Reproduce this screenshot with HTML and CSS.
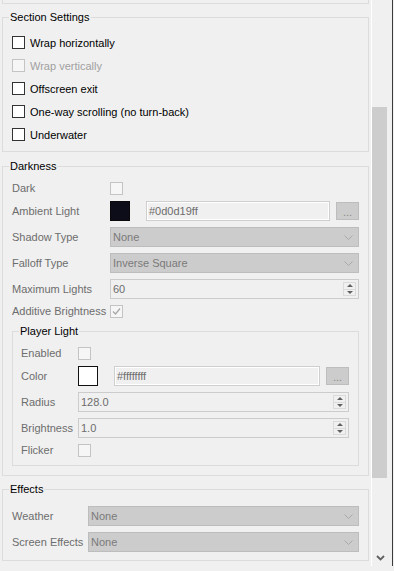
FILE: index.html
```html
<!DOCTYPE html>
<html lang="en">
<head>
    <meta charset="UTF-8">
    <title>Section Properties</title>
    <link rel="stylesheet" href="styles.css">
</head>
<body>
    <div class="window">
        <div class="pane">
            <div class="group-tail"></div>

            <fieldset class="group group-section">
                <legend>Section Settings</legend>
                <div class="check-row"><span class="box"></span>Wrap horizontally</div>
                <div class="check-row disabled"><span class="box"></span>Wrap vertically</div>
                <div class="check-row"><span class="box"></span>Offscreen exit</div>
                <div class="check-row"><span class="box"></span>One-way scrolling (no turn-back)</div>
                <div class="check-row"><span class="box"></span>Underwater</div>
            </fieldset>

            <fieldset class="group group-darkness">
                <legend>Darkness</legend>
                <div class="form">
                    <div class="field">
                        <span class="label">Dark</span>
                        <span class="box box-off"></span>
                    </div>
                    <div class="field">
                        <span class="label">Ambient Light</span>
                        <div class="color-pick">
                            <span class="swatch swatch-dark"></span>
                            <span class="text-input">#0d0d19ff</span>
                            <span class="dots">...</span>
                        </div>
                    </div>
                    <div class="field">
                        <span class="label">Shadow Type</span>
                        <div class="combo"><span>None</span><svg width="9" height="5" viewBox="0 0 9 5"><polyline points="0.5,0.5 4.5,4.5 8.5,0.5" fill="none" stroke="#a9a9a9" stroke-width="1"/></svg></div>
                    </div>
                    <div class="field">
                        <span class="label">Falloff Type</span>
                        <div class="combo"><span>Inverse Square</span><svg width="9" height="5" viewBox="0 0 9 5"><polyline points="0.5,0.5 4.5,4.5 8.5,0.5" fill="none" stroke="#a9a9a9" stroke-width="1"/></svg></div>
                    </div>
                    <div class="field">
                        <span class="label">Maximum Lights</span>
                        <div class="spin"><span>60</span><span class="spin-buttons"><span class="spin-up"></span><span class="spin-down"></span></span></div>
                    </div>
                    <div class="field">
                        <span class="label">Additive Brightness</span>
                        <span class="box box-off"><svg width="11" height="11" viewBox="0 0 11 11"><polyline points="2,5.5 4.5,8 9,2.5" fill="none" stroke="#a6a6a6" stroke-width="1.2"/></svg></span>
                    </div>

                    <fieldset class="group group-player">
                        <legend>Player Light</legend>
                        <div class="form">
                            <div class="field">
                                <span class="label">Enabled</span>
                                <span class="box box-off"></span>
                            </div>
                            <div class="field">
                                <span class="label">Color</span>
                                <div class="color-pick">
                                    <span class="swatch swatch-white"></span>
                                    <span class="text-input">#ffffffff</span>
                                    <span class="dots">...</span>
                                </div>
                            </div>
                            <div class="field">
                                <span class="label">Radius</span>
                                <div class="spin"><span>128.0</span><span class="spin-buttons"><span class="spin-up"></span><span class="spin-down"></span></span></div>
                            </div>
                            <div class="field">
                                <span class="label">Brightness</span>
                                <div class="spin"><span>1.0</span><span class="spin-buttons"><span class="spin-up"></span><span class="spin-down"></span></span></div>
                            </div>
                            <div class="field">
                                <span class="label">Flicker</span>
                                <span class="box box-off"></span>
                            </div>
                        </div>
                    </fieldset>
                </div>
            </fieldset>

            <fieldset class="group group-effects">
                <legend>Effects</legend>
                <div class="form">
                    <div class="field">
                        <span class="label">Weather</span>
                        <div class="combo"><span>None</span><svg width="9" height="5" viewBox="0 0 9 5"><polyline points="0.5,0.5 4.5,4.5 8.5,0.5" fill="none" stroke="#a9a9a9" stroke-width="1"/></svg></div>
                    </div>
                    <div class="field">
                        <span class="label">Screen Effects</span>
                        <div class="combo"><span>None</span><svg width="9" height="5" viewBox="0 0 9 5"><polyline points="0.5,0.5 4.5,4.5 8.5,0.5" fill="none" stroke="#a9a9a9" stroke-width="1"/></svg></div>
                    </div>
                </div>
            </fieldset>
        </div>

        <div class="scrollbar">
            <div class="thumb"></div>
            <svg class="arrow-down" width="9" height="6" viewBox="0 0 9 6"><polyline points="1,1 4.5,4.5 8,1" fill="none" stroke="#606060" stroke-width="1.8"/></svg>
        </div>
    </div>
</body>
</html>
```

FILE: styles.css
```css
body {
    margin: 0;
    background-color: #f0f0f0;
    font-family: "Liberation Sans", Arial, sans-serif;
    font-size: 11px;
    color: #000;
    overflow: hidden;
}

.window {
    display: flex;
    height: 571px;
}

.pane {
    width: 367px;
    padding-left: 2px;
}

.group-tail {
    height: 4px;
    box-sizing: border-box;
    border: 1px solid #dcdcdc;
    border-top: none;
}

.group {
    margin: 0;
    min-width: 0;
    border: 1px solid #dcdcdc;
    padding: 0 9px;
}

.group legend {
    padding: 0 1px;
    margin-left: -3px;
    line-height: 14px;
}

.group-section {
    margin-top: 6px;
    padding-top: 7px;
    padding-bottom: 5px;
}

.group-darkness {
    margin-top: 7px;
    padding-top: 9px;
    padding-bottom: 9px;
}

.group-player {
    padding: 9px 9px 8px 8px;
}

.group-player legend {
    margin-left: -2px;
}

.group-effects {
    margin-top: 6px;
    padding-top: 10px;
    padding-bottom: 8px;
}

.check-row {
    display: flex;
    align-items: center;
    gap: 5px;
    height: 23px;
}

.check-row.disabled {
    color: #a0a0a0;
}

.box {
    width: 13px;
    height: 13px;
    box-sizing: border-box;
    border: 1px solid #333;
    background-color: #fff;
    display: flex;
    align-items: center;
    justify-content: center;
}

.check-row.disabled .box,
.box-off {
    border-color: #c4c4c4;
    background-color: #f6f6f6;
}

.form {
    display: flex;
    flex-direction: column;
    gap: 6px;
}

.field {
    display: grid;
    grid-template-columns: 98px 1fr;
    align-items: center;
}

.group-player .field {
    grid-template-columns: 57px 1fr;
}

.group-effects .field {
    grid-template-columns: 76px 1fr;
}

.label {
    color: #6d6d6d;
    line-height: 13px;
}

.color-pick {
    display: flex;
    align-items: center;
    height: 20px;
}

.swatch {
    width: 20px;
    height: 20px;
    box-sizing: border-box;
    margin-right: 16px;
}

.swatch-dark {
    background-color: #0d0d19;
    border: 1px solid #0a0a0a;
}

.swatch-white {
    background-color: #fff;
    border: 1px solid #111;
}

.text-input {
    flex: 1;
    height: 20px;
    box-sizing: border-box;
    border: 1px solid #cfcfcf;
    box-shadow: inset 0 0 0 1px #fff;
    padding-left: 2px;
    line-height: 18px;
    color: #6d6d6d;
}

.dots {
    width: 23px;
    height: 18px;
    margin-left: 6px;
    box-sizing: border-box;
    border: 1px solid #bdbdbd;
    background-color: #ccc;
    color: #8a8a8a;
    text-align: center;
    line-height: 18px;
}

.combo {
    height: 20px;
    box-sizing: border-box;
    border: 1px solid #bdbdbd;
    background-color: #ccc;
    color: #7a7a7a;
    display: flex;
    align-items: center;
    justify-content: space-between;
    padding: 0 5px 0 2px;
}

.spin {
    height: 20px;
    box-sizing: border-box;
    border: 1px solid #ccc;
    color: #6d6d6d;
    display: flex;
    align-items: center;
    justify-content: space-between;
    padding: 0 2px 0 2px;
}

.spin-buttons {
    display: flex;
    flex-direction: column;
    width: 13px;
    height: 14px;
    box-sizing: border-box;
    border: 1px solid #dadada;
}

.spin-up,
.spin-down {
    flex: 1;
    display: flex;
    align-items: center;
    justify-content: center;
}

.spin-up {
    border-bottom: 1px solid #dadada;
}

.spin-up::after {
    content: "";
    border-left: 3px solid transparent;
    border-right: 3px solid transparent;
    border-bottom: 3px solid #606060;
}

.spin-down::after {
    content: "";
    border-left: 3px solid transparent;
    border-right: 3px solid transparent;
    border-top: 3px solid #606060;
}

.scrollbar {
    width: 20px;
    height: 566px;
    margin-left: 2px;
    border-left: 1px solid #fff;
    border-right: 1px solid #3c3c3c;
    display: flex;
    flex-direction: column;
}

.thumb {
    width: 15px;
    height: 371px;
    margin-top: 107px;
    background-color: #cdcdcd;
}

.arrow-down {
    margin-top: auto;
    margin-left: 4px;
    margin-bottom: 5px;
}
```
